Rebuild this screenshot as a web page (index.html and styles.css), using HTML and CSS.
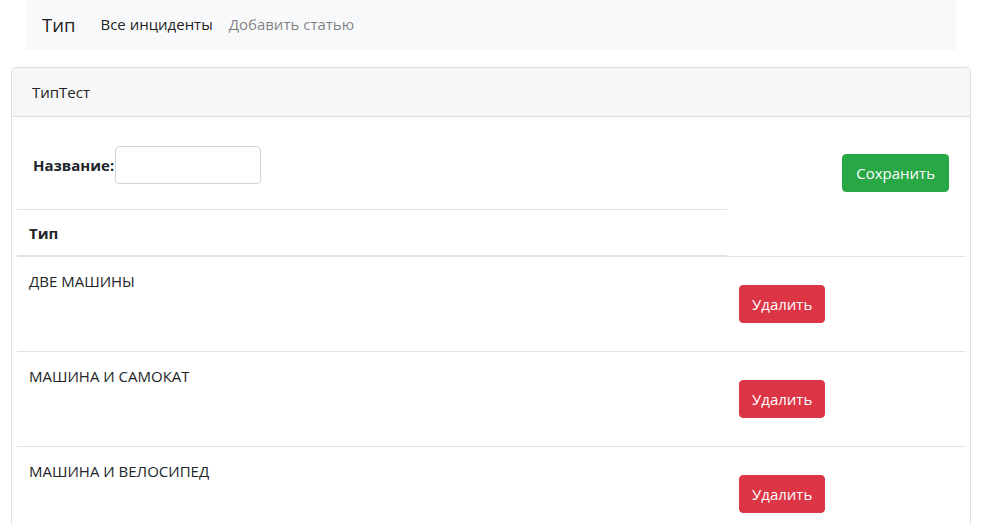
FILE: index.html
```html
<!DOCTYPE html>
<html lang="ru">
<head>
<meta charset="utf-8">
<title>Тип</title>
<link rel="stylesheet" href="styles.css">
</head>
<body>
<nav class="navbar">
  <a class="brand" href="#">Тип</a>
  <a class="nav-link active" href="#">Все инциденты</a>
  <a class="nav-link" href="#">Добавить статью</a>
</nav>
<div class="card">
  <div class="card-header">ТипТест</div>
  <div class="card-body">
    <div class="form-row">
      <div class="field">
        <label class="label" for="name">Название:</label>
        <input class="input" id="name" type="text">
      </div>
      <button class="btn btn-success save">Сохранить</button>
    </div>
    <table class="table">
      <thead>
        <tr><th>Тип</th></tr>
      </thead>
      <tbody>
        <tr>
          <td class="name">ДВЕ МАШИНЫ</td>
          <td class="act"><div class="act-form"><button class="btn btn-danger">Удалить</button></div></td>
        </tr>
        <tr>
          <td class="name">МАШИНА И САМОКАТ</td>
          <td class="act"><div class="act-form"><button class="btn btn-danger">Удалить</button></div></td>
        </tr>
        <tr>
          <td class="name">МАШИНА И ВЕЛОСИПЕД</td>
          <td class="act"><div class="act-form"><button class="btn btn-danger">Удалить</button></div></td>
        </tr>
      </tbody>
    </table>
  </div>
</div>
</body>
</html>
```
FILE: styles.css
```css
* { box-sizing: border-box; }
html, body { margin: 0; padding: 0; }
body {
  font-family: "Open Sans", "Noto Sans", sans-serif;
  font-size: 15px;
  line-height: 24px;
  color: #212529;
  background: #fff;
}
.navbar {
  margin: 0 25px 0 26px;
  height: 50px;
  background: #f8f9fa;
  display: flex;
  align-items: center;
  padding: 0 16px;
}
.brand {
  font-size: 18.5px;
  line-height: 30px;
  color: rgba(0,0,0,.9);
  text-decoration: none;
  margin-right: 17px;
  margin-top: 0;
}
.nav-link {
  padding: 0 8px;
  color: rgba(0,0,0,.5);
  text-decoration: none;
  margin-bottom: 2px;
}
.nav-link.active { color: rgba(0,0,0,.9); }
.card {
  margin: 17px 10px 0 11px;
  border: 1px solid #dfdfdf;
  border-radius: 4px;
  height: 500px;
}
.card-header {
  background: #f7f7f7;
  padding: 12px 20px;
  border-bottom: 1px solid #dfdfdf;
  border-radius: 3px 3px 0 0;
}
.card-body { padding: 29px 5px 0; }
.form-row {
  display: flex;
  justify-content: space-between;
  align-items: flex-start;
  padding: 0 16px 0 16px;
  margin-bottom: 17px;
}
.field { display: flex; align-items: center; }
.label { font-weight: 700; margin-right: 1px; }
.input {
  width: 146px;
  height: 38px;
  border: 1px solid #ced4da;
  border-radius: 4px;
  font: inherit;
  padding: 6px 12px;
}
.btn {
  font: inherit;
  line-height: 24px;
  padding: 6px 12px;
  border: 1px solid transparent;
  border-radius: 4px;
  color: #fff;
  cursor: pointer;
}
.btn-success { background: #28a745; border-color: #28a745; }
.btn-danger { background: #dc3545; border-color: #dc3545; }
.save { margin-top: 8px; padding: 6px 13px; }
.table {
  width: 100%;
  border-collapse: collapse;
}
.table th {
  text-align: left;
  font-weight: 700;
  padding: 11px 12px 10px;
  border-top: 1px solid #dee2e6;
  border-bottom: 2px solid #dee2e6;
  width: 710px;
}
.table td {
  padding: 12px;
  vertical-align: top;
  border-top: 1px solid #dee2e6;
}
.table td.name { width: 710px; }
.act-form { padding: 16px 0; }
.act .btn { display: block; }
```
